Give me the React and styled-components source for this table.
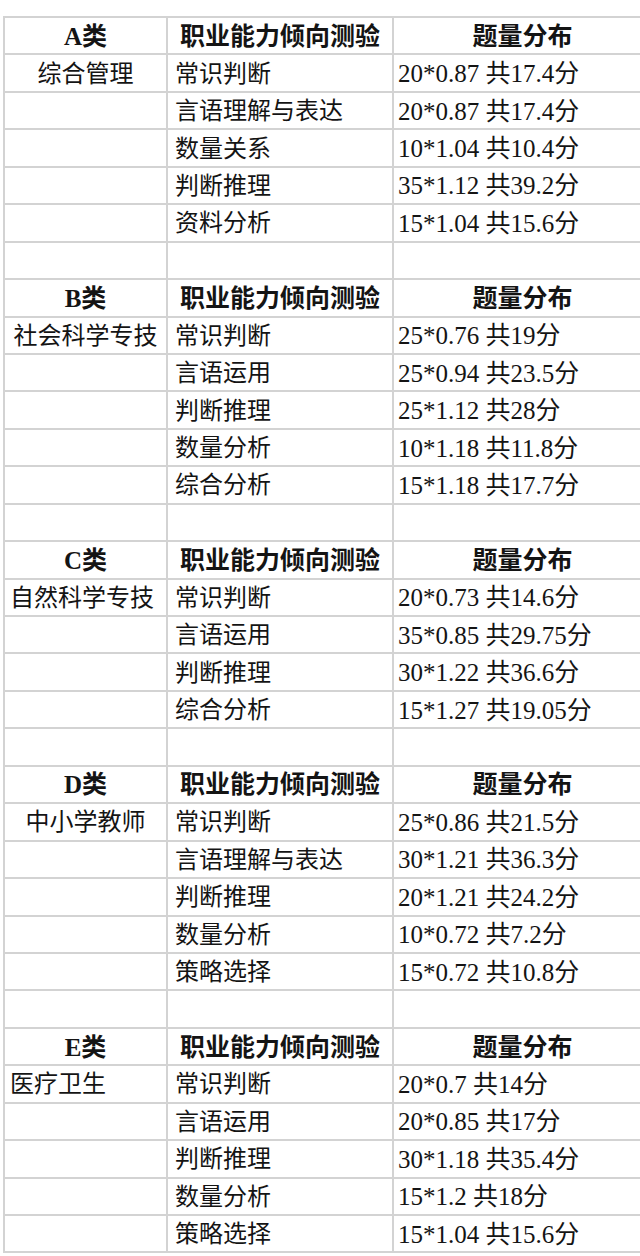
import styled, {createGlobalStyle} from "styled-components"

const Global = createGlobalStyle`
    html, body {
        margin: 0;
        padding: 0;
        background: #fff;
        overflow: hidden;
    }
`

const Sheet = styled.div`
    margin: 16px 0 0 3px;
    width: 648px;
    display: grid;
    grid-template-columns: 163px 226px 1fr;
    grid-auto-rows: 37.45px;
    border-top: 2px solid #d3d3d3;
    border-left: 2px solid #d3d3d3;
    font-family: "Liberation Serif", "Noto Sans CJK SC", serif;
    font-size: 24px;
    color: #141414;
`

const Cell = styled.div`
    box-sizing: border-box;
    border-right: 2px solid #d3d3d3;
    border-bottom: 2px solid #d3d3d3;
    display: flex;
    align-items: center;
    justify-content: ${({$align}) => $align === "center" ? "center" : "flex-start"};
    padding: 1px ${({$pad}) => $pad || 0}px 0;
    font-weight: ${({$head}) => $head ? 700 : 400};
    font-size: ${({$head, $size}) => $size ? $size + "px" : $head ? "25px" : "24px"};
    line-height: 1;
    white-space: nowrap;
`

const groups = [
    {
        name: "A类", cat: "综合管理", align: "center",
        items: [
            ["常识判断", "20*0.87 共17.4分"],
            ["言语理解与表达", "20*0.87 共17.4分"],
            ["数量关系", "10*1.04 共10.4分"],
            ["判断推理", "35*1.12 共39.2分"],
            ["资料分析", "15*1.04 共15.6分"],
        ]
    },
    {
        name: "B类", cat: "社会科学专技", align: "center",
        items: [
            ["常识判断", "25*0.76 共19分"],
            ["言语运用", "25*0.94 共23.5分"],
            ["判断推理", "25*1.12 共28分"],
            ["数量分析", "10*1.18 共11.8分"],
            ["综合分析", "15*1.18 共17.7分"],
        ]
    },
    {
        name: "C类", cat: "自然科学专技", align: "left",
        items: [
            ["常识判断", "20*0.73 共14.6分"],
            ["言语运用", "35*0.85 共29.75分"],
            ["判断推理", "30*1.22 共36.6分"],
            ["综合分析", "15*1.27 共19.05分"],
        ]
    },
    {
        name: "D类", cat: "中小学教师", align: "center",
        items: [
            ["常识判断", "25*0.86 共21.5分"],
            ["言语理解与表达", "30*1.21 共36.3分"],
            ["判断推理", "20*1.21 共24.2分"],
            ["数量分析", "10*0.72 共7.2分"],
            ["策略选择", "15*0.72 共10.8分"],
        ]
    },
    {
        name: "E类", cat: "医疗卫生", align: "left",
        items: [
            ["常识判断", "20*0.7 共14分"],
            ["言语运用", "20*0.85 共17分"],
            ["判断推理", "30*1.18 共35.4分"],
            ["数量分析", "15*1.2 共18分"],
            ["策略选择", "15*1.04 共15.6分"],
        ]
    },
]

export default function App() {
    return (
        <>
            <Global />
            <Sheet>
                {groups.map((g, gi) => (
                    <Group key={g.name} group={g} last={gi === groups.length - 1} />
                ))}
            </Sheet>
        </>
    )
}

const Group = ({group, last}) => {
    return (
        <>
            <Cell $head $align="center">{group.name}</Cell>
            <Cell $head $align="center">职业能力倾向测验</Cell>
            <Cell $head $align="center">题量分布</Cell>
            {group.items.map((it, i) => (
                <Row key={it[0] + i} cat={i === 0 ? group.cat : ""} align={group.align} item={it} />
            ))}
            {!last && <>
                <Cell />
                <Cell />
                <Cell />
            </>}
        </>
    )
}

const Row = ({cat, align, item}) => (
    <>
        <Cell $align={align} $pad={align === "left" ? 5 : 0}>{cat}</Cell>
        <Cell $pad={7}>{item[0]}</Cell>
        <Cell $pad={4} $size={25}>{item[1]}</Cell>
    </>
)
